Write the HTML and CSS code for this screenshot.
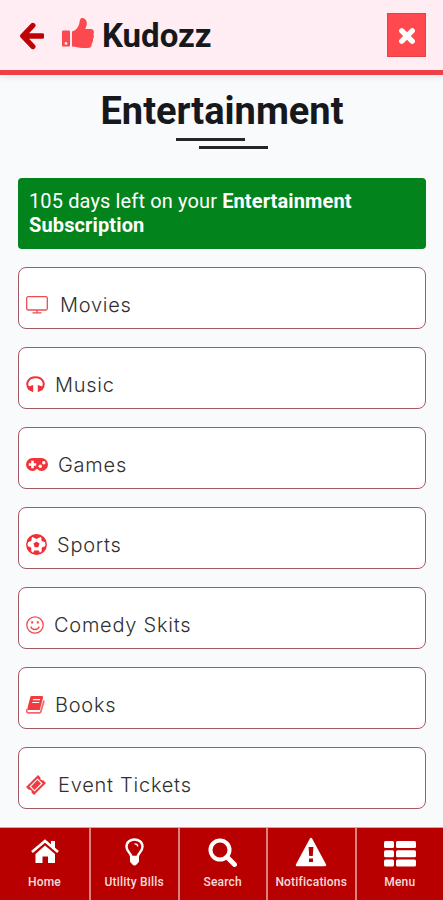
FILE: index.html
```html
<!DOCTYPE html>
<html lang="en">
<head>
    <meta charset="UTF-8">
    <meta name="viewport" content="width=device-width, initial-scale=1.0">
    <title>Entertainment - Kudozz</title>
    <link rel="stylesheet" href="styles.css">
</head>
<body>
    <header class="top-bar">
        <svg class="back-icon" viewBox="0 0 25 28"><path d="M13.500 3.500L3.500 14l10 10.500M4 14h19" fill="none" stroke="#bd0303" stroke-width="5.400" stroke-linecap="round" stroke-linejoin="round" transform="translate(.3 0)"/></svg>
        <svg class="logo-icon" viewBox="0 0 32 30">
            <path fill="#fc4950" fill-rule="evenodd" d="M1 12.500h6q1 0 1 1V27.500q0 1-1 1H1q-1 0-1-1V13.500q0-1 1-1zM4 24a1.400 1.400 0 1 0 0 2.800 1.400 1.400 0 0 0 0-2.800z"/>
            <path fill="#fc4950" d="M10 13.500c4-1 6-4 7.200-7.500C17.800 3 18 0 20 0c4 0 5.500 4 4.500 7.500L23.300 11H29.500c2.500.8 3 3.200 1.900 5.200.8 1.800.5 3.600-.5 4.800.3 1.800 0 3.300-1.100 4.400 0 3-1.300 4.600-4.300 4.600h-5c-4 0-6-1.500-10.500-1.500z"/>
        </svg>
        <span class="brand">Kudozz</span>
        <button class="close-btn" aria-label="Close">
            <svg viewBox="0 0 18 18"><path d="M3.800 3.800l10.400 10.400M14.200 3.800L3.800 14.200" stroke="#fff" stroke-width="5.400" stroke-linecap="round"/></svg>
        </button>
    </header>

    <main class="content">
        <h1 class="page-title">Entertainment</h1>
        <div class="title-lines"><span></span><span></span></div>

        <div class="alert">105 days left on your <b>Entertainment Subscription</b></div>

        <div class="category-list">
            <a class="category">
                <svg width="22" height="18" viewBox="0 0 22 18" fill="none" stroke="#ed4c51" stroke-width="1.300"><rect x=".7" y=".7" width="20.600" height="13.300" rx="1.500"/><path d="M11 14v2.700M6.500 16.900h9"/></svg>
                <span>Movies</span>
            </a>
            <a class="category">
                <svg width="19" height="17" viewBox="0 0 19 17"><path d="M3 12.500C-1 7.500 2.500 1.200 9.500 1.200S20 7.500 16 12.500" fill="none" stroke="#ee3338" stroke-width="2"/><path fill="#ee3338" d="M1 11l6.200-2v7.200L2.500 14zM18 11l-6.200-2v7.200l4.700-2.200z"/></svg>
                <span class="label-close">Music</span>
            </a>
            <a class="category">
                <svg width="22" height="13" viewBox="0 0 22 13"><path fill="#f03439" d="M6.500 0h9A6.500 6.500 0 0 1 15.500 13c-2 0-3-.8-4-2h-1c-1 1.200-2 2-4 2A6.500 6.500 0 0 1 6.500 0z"/><path d="M6.500 2.800v7.400M2.800 6.500h7.400" stroke="#fff" stroke-width="2.600"/><circle cx="14.300" cy="8.300" r="1.700" fill="#fff"/><circle cx="17.800" cy="4.800" r="1.700" fill="#fff"/></svg>
                <span class="label-close">Games</span>
            </a>
            <a class="category">
                <svg width="21" height="21" viewBox="0 0 21 21"><circle cx="10.500" cy="10.500" r="9.700" fill="#fff" stroke="#ed3036" stroke-width="1.500"/><g fill="#ed3036"><path d="M10.500 7.400l3 2.200-1.200 3.600H8.700L7.500 9.600zM5 2.200l5.500 2.800L16 2.200 10.500.5zM1 8.500l4.300-1.500.7-4.800L2 5zM20 8.500l-4.300-1.500-.7-4.800L19 5zM1.200 12l4 1.500.2 4.800-2.900-2.500zM19.800 12l-4 1.500-.2 4.800 2.900-2.500zM6.800 19.500l1.400-3h4.600l1.400 3-3.700.7z"/></g></svg>
                <span class="label-close">Sports</span>
            </a>
            <a class="category">
                <svg width="18" height="18" viewBox="0 0 18 18" fill="none" stroke="#ef4b50" stroke-width="1.300"><circle cx="9" cy="9" r="8.200"/><path d="M4.800 10.500c1 4 7.400 4 8.400 0"/><path d="M6.200 5.200v2.300M11.800 5.200v2.300" stroke-width="2"/></svg>
                <span class="label-close">Comedy Skits</span>
            </a>
            <a class="category">
                <svg width="19" height="18" viewBox="0 0 19 18"><path fill="#f23a3f" d="M5.500 0H16q1.500 0 1 1.800L13.800 14H2.300q-1.500 0-.8-2L4.300 1Q4.600 0 5.500 0z"/><path d="M1 13c-1 2.500 0 3.800 1.500 3.800h11q1 0 1.300-1L18 4.500" fill="none" stroke="#f4686c" stroke-width="1.800"/><path d="M7 3.700h7M6.200 6.500h7" stroke="#fff" stroke-width="1.200"/></svg>
                <span class="label-close">Books</span>
            </a>
            <a class="category">
                <svg width="20" height="20" viewBox="0 0 20 20"><path fill="#f03b40" d="M12 0l2.500 2.500c-.5 2 .7 3.200 2.700 2.700L20 8 8 20l-2.500-2.500c.5-2-.7-3.200-2.700-2.700L0 12z"/><path d="M11.500 4.200l4.300 4.300-7.300 7.300-4.300-4.300z" fill="#f03b40" stroke="#fff" stroke-width="1.100"/></svg>
                <span>Event Tickets</span>
            </a>
        </div>
    </main>

    <nav class="bottom-nav">
        <a>
            <svg width="28" height="25" viewBox="0 0 28 25"><path d="M1 13L14 2l13 11" fill="none" stroke="#fff" stroke-width="2.700"/><path fill="#fff" d="M20 2h4v8l-4-3.500zM14 6.500L24 15v9h-7v-6.500h-5.500V24H4.500v-9z"/></svg>
            <span>Home</span>
        </a>
        <a>
            <svg width="19" height="28" viewBox="0 0 19 28"><path d="M6.300 19c0-4-4.800-5.200-4.800-10.200 0-9.800 16-9.800 16 0 0 5-4.800 6.200-4.800 10.200z" fill="none" stroke="#fff" stroke-width="2.400"/><path d="M9.500 5.800c2 0 3.300 1 3.300 2.800" fill="none" stroke="#fff" stroke-width="1.300"/><path fill="#fff" d="M5 18.500h9v5.300l-2 2.200q-2.500 3-5 0L5 23.800z"/></svg>
            <span>Utility Bills</span>
        </a>
        <a>
            <svg class="icon-low" width="29" height="29" viewBox="0 0 29 29" fill="none" stroke="#fff"><circle cx="12" cy="12" r="9.500" stroke-width="4"/><path d="M19 19l7.500 7.500" stroke-width="4.800" stroke-linecap="round"/></svg>
            <span>Search</span>
        </a>
        <a>
            <svg width="32" height="30" viewBox="0 0 32 30"><path d="M16 2L30 28H2z" fill="#fff" stroke="#fff" stroke-width="2.500" stroke-linejoin="round"/><path fill="#b90000" d="M13.600 10h4.800l-.6 9h-3.600zM14 21.500h4V25h-4z"/></svg>
            <span>Notifications</span>
        </a>
        <a>
            <svg class="icon-low" width="32" height="26" viewBox="0 0 32 26" fill="#fff"><rect width="10" height="7" rx="1.500"/><rect x="12" width="20" height="7" rx="1.500"/><rect y="9.300" width="10" height="7" rx="1.500"/><rect x="12" y="9.300" width="20" height="7" rx="1.500"/><rect y="18.600" width="10" height="7" rx="1.500"/><rect x="12" y="18.600" width="20" height="7" rx="1.500"/></svg>
            <span>Menu</span>
        </a>
    </nav>
</body>
</html>
```
FILE: styles.css
```css
* {
    box-sizing: border-box;
}

body {
    font-family: Roboto, sans-serif;
    margin: 0;
    height: 900px;
    background-color: #f8fafc;
    color: #16181b;
    display: flex;
    flex-direction: column;
    overflow: hidden;
}

.top-bar {
    height: 75px;
    flex: none;
    display: flex;
    align-items: center;
    padding: 0 17px 0 19px;
    background: #ffedf3;
    border-bottom: 5px solid #ec4247;
    box-shadow: 0 1px 8px rgba(0, 0, 0, 0.1);
}

.back-icon {
    width: 25px;
    height: 28px;
    margin-top: 2px;
}

.logo-icon {
    width: 32px;
    height: 30px;
    margin: -4px 8px 0 18px;
}

.brand {
    font-size: 33px;
    font-weight: 700;
}

.close-btn {
    width: 39px;
    height: 44px;
    margin-left: auto;
    padding: 2px 0 0;
    border: 1px solid #e04449;
    background: #ff494e;
    display: flex;
    align-items: center;
    justify-content: center;
}

.close-btn svg {
    width: 18px;
    height: 18px;
}

.content {
    flex: 1;
    padding: 13px 17px 0 18px;
}

.page-title {
    margin: 0;
    font-size: 38px;
    line-height: 46px;
    font-weight: 700;
    text-align: center;
}

.title-lines {
    width: 92px;
    margin: 4px auto 29px;
    display: flex;
    flex-direction: column;
    gap: 5px;
}

.title-lines span {
    width: 69px;
    height: 3px;
    background: #24272a;
}

.title-lines span:last-child {
    align-self: flex-end;
}

.alert {
    height: 71px;
    padding: 11px;
    border-radius: 4px;
    background: #03831c;
    color: #fff;
    font-size: 20px;
    line-height: 24px;
    letter-spacing: 0.13px;
}

.category-list {
    margin-top: 18px;
    display: flex;
    flex-direction: column;
    gap: 18px;
}

.category {
    height: 62px;
    padding: 13px 7px 0;
    display: flex;
    align-items: center;
    gap: 12px;
    border: 1px solid #a45a65;
    border-radius: 8px;
    background: #fff;
    color: #303030;
    font-family: Inter, sans-serif;
    font-size: 20px;
    font-weight: 300;
    letter-spacing: 0.75px;
}

.label-close {
    margin-left: -2px;
}

.bottom-nav {
    height: 73px;
    flex: none;
    display: flex;
    background: #b90000;
    border-top: 1px solid #d9a3a3;
}

.bottom-nav a {
    flex: 1;
    display: flex;
    flex-direction: column;
    align-items: center;
    color: #f8dcdc;
    font-size: 12px;
    font-weight: 500;
    letter-spacing: 0.2px;
    border-right: 2px solid #d68383;
}

.bottom-nav a:first-child {
    flex: 0 0 91px;
}

.bottom-nav a:last-child {
    border-right: none;
}

.bottom-nav svg {
    margin: auto 0;
}

.bottom-nav .icon-low {
    padding-top: 0;
    margin-bottom: 8px;
}

.bottom-nav span {
    height: 25px;
    line-height: 15px;
}
```
